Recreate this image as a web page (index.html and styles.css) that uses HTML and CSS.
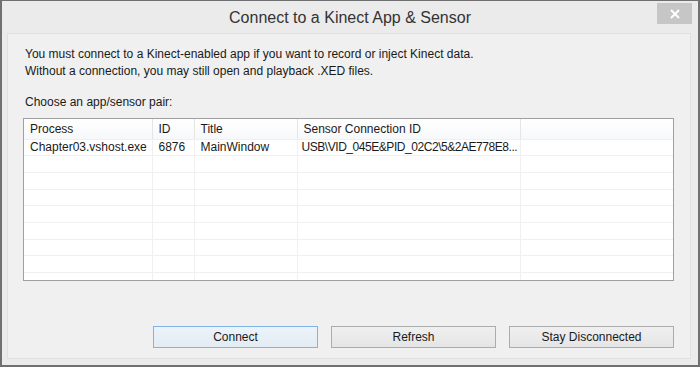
FILE: index.html
```html
<!DOCTYPE html>
<html lang="en">
<head>
  <meta charset="UTF-8"/>
  <title>Connect to a Kinect App &amp; Sensor</title>
  <link rel="stylesheet" href="styles.css">
</head>
<body>

  <div class="window">

    <!-- Title bar -->
    <div class="titlebar">
      <div></div>
      <div class="title">Connect to a Kinect App &amp; Sensor</div>
      <button class="close-btn" aria-label="Close">
        <svg width="10" height="10" viewBox="0 0 10 10">
          <path d="M1 1 L9 9 M9 1 L1 9" stroke="#fff" stroke-width="2"/>
        </svg>
      </button>
    </div>

    <!-- Dialog body -->
    <div class="panel">
      <p class="intro">
        You must connect to a Kinect-enabled app if you want to record or inject Kinect data.<br>
        Without a connection, you may still open and playback .XED files.
      </p>
      <p class="label">Choose an app/sensor pair:</p>

      <div class="list">
        <table>
          <colgroup>
            <col class="c-process">
            <col class="c-id">
            <col class="c-title">
            <col class="c-sensor">
            <col>
          </colgroup>
          <thead>
            <tr>
              <th>Process</th>
              <th>ID</th>
              <th>Title</th>
              <th>Sensor Connection ID</th>
              <th></th>
            </tr>
          </thead>
          <tbody id="rows">
            <tr>
              <td>Chapter03.vshost.exe</td>
              <td>6876</td>
              <td>MainWindow</td>
              <td class="sensor">USB\VID_045E&amp;PID_02C2\5&amp;2AE778E8...</td>
              <td></td>
            </tr>
            <tr><td></td><td></td><td></td><td></td><td></td></tr>
            <tr><td></td><td></td><td></td><td></td><td></td></tr>
            <tr><td></td><td></td><td></td><td></td><td></td></tr>
            <tr><td></td><td></td><td></td><td></td><td></td></tr>
            <tr><td></td><td></td><td></td><td></td><td></td></tr>
            <tr><td></td><td></td><td></td><td></td><td></td></tr>
            <tr><td></td><td></td><td></td><td></td><td></td></tr>
            <tr><td></td><td></td><td></td><td></td><td></td></tr>
          </tbody>
        </table>
      </div>

      <div class="actions">
        <button class="btn default">Connect</button>
        <button class="btn">Refresh</button>
        <button class="btn">Stay Disconnected</button>
      </div>
    </div>

  </div>

</body>
</html>
```

FILE: styles.css
```css
* {
  margin: 0;
  padding: 0;
  box-sizing: border-box;
  font-family: 'Liberation Sans', Arial, sans-serif;
}

body {
  background: #ebebeb;
  color: #1a1a1a;
  font-size: 12px;
}

.window {
  width: 700px;
  height: 367px;
  display: flex;
  flex-direction: column;
  background: #ebebeb;
  border: 2px solid #707070;
  border-top-width: 1px;
}

.titlebar {
  height: 32px;
  display: grid;
  grid-template-columns: 1fr auto 1fr;
  align-items: start;
}

.title {
  font-size: 16px;
  color: #333;
  padding-top: 8px;
}

.close-btn {
  justify-self: end;
  width: 35px;
  height: 21px;
  margin-top: 2px;
  margin-right: 6px;
  background: #c6c6c6;
  border: none;
  display: flex;
  align-items: center;
  justify-content: center;
}

.panel {
  flex: 1;
  display: flex;
  flex-direction: column;
  margin: 0 7px 6px 5px;
  padding: 12px 16px 10px 15px;
  background: #f0f0f0;
  border: 1px solid #e0e0e0;
}

.intro,
.label {
  line-height: 17px;
}

.intro {
  padding-left: 2px;
}

.label {
  margin-top: 14px;
  padding-left: 2px;
}

.list {
  margin-top: 7px;
  height: 163px;
  background: #fff;
  border: 1px solid #a0a0a0;
  overflow: hidden;
}

table {
  width: 100%;
  table-layout: fixed;
  border-collapse: collapse;
}

.c-process { width: 128px; }
.c-id { width: 42px; }
.c-title { width: 103px; }
.c-sensor { width: 223px; }

th,
td {
  text-align: left;
  font-weight: normal;
  padding: 0 5px 0 6px;
  white-space: nowrap;
  overflow: hidden;
}

th {
  height: 20px;
  background: linear-gradient(#fff, #f7f8fa);
  border-right: 1px solid #e5e5e5;
  border-bottom: 1px solid #eef0f3;
}

td {
  height: 16.7px;
  border-right: 1px solid #f0f0f0;
  border-bottom: 1px solid #f0f0f0;
}

td.sensor {
  padding-left: 4px;
  padding-right: 0;
  letter-spacing: -0.45px;
}

th:last-child,
td:last-child {
  border-right: none;
}

.actions {
  margin-top: auto;
  display: flex;
  justify-content: flex-end;
  gap: 13px;
}

.btn {
  width: 165px;
  height: 22px;
  font-size: 12px;
  color: #1a1a1a;
  background: linear-gradient(#efefef, #e5e5e5);
  border: 1px solid #acacac;
}

.btn.default {
  border-color: #7eb4ea;
  background: linear-gradient(#ecf3fa, #e3ebf3);
}
```
